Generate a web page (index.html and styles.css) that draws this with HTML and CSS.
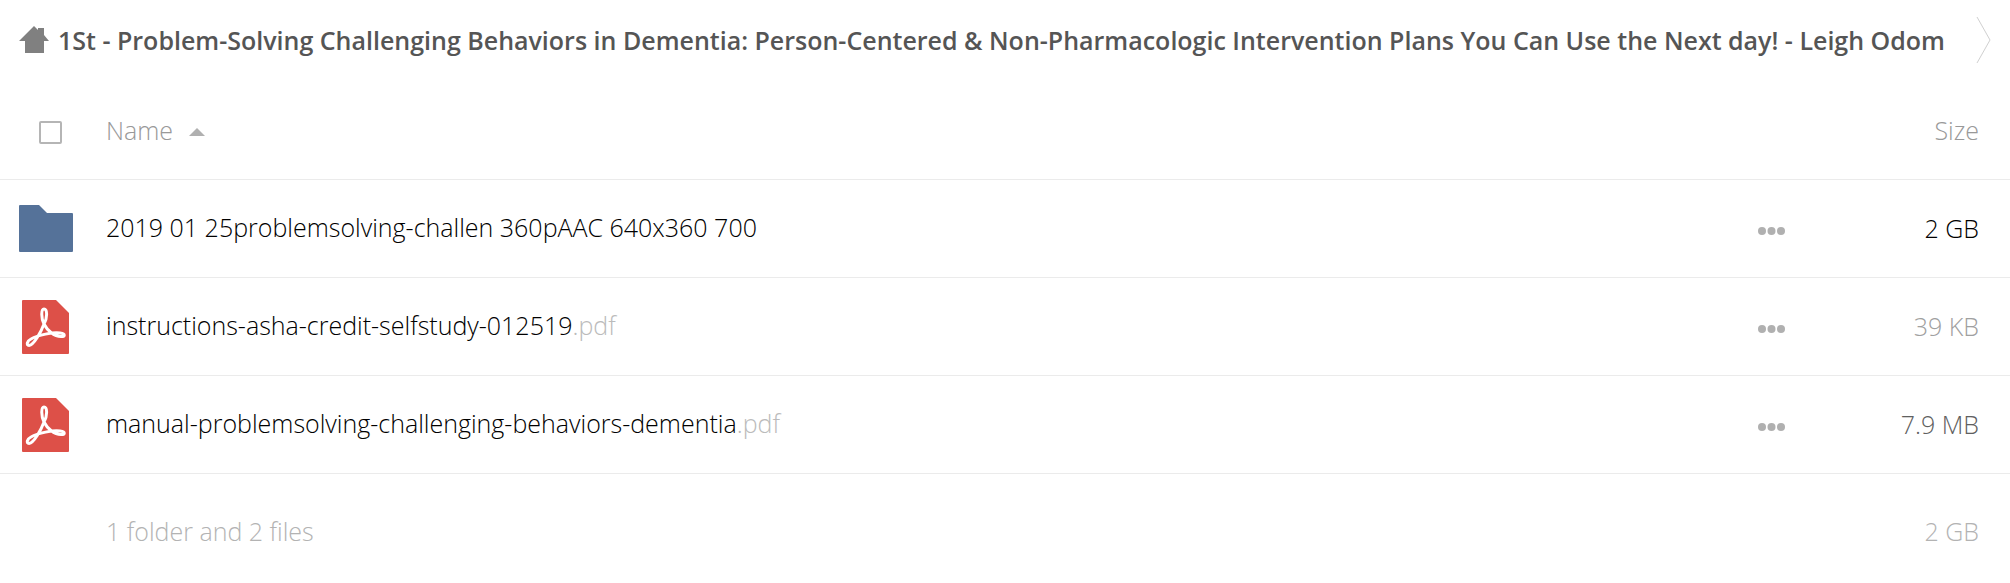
FILE: index.html
```
<!DOCTYPE html>
<html lang="en">
<head>
    <meta charset="UTF-8">
    <meta name="viewport" content="width=device-width, initial-scale=1.0">
    <title>Files</title>
    <link rel="stylesheet" href="styles.css">
</head>
<body>
    <!-- icons used more than once -->
    <svg class="sprite" aria-hidden="true">
        <symbol id="icon-pdf" viewBox="0 0 47 54">
            <path fill="#dd5048" d="M1 0H34L47 13V53a1 1 0 0 1-1 1H1a1 1 0 0 1-1-1V1a1 1 0 0 1 1-1z"/>
            <path fill="none" stroke="#fff" stroke-width="3" stroke-linejoin="round" d="M22 24C19 18 19 9 22 9C25.500 9 25.500 18 22 24C19 32 12 45 7 45.500C4 45.500 5 41 9 39C16 35 31 32 38 33C44 34 43 36.500 39 36.500C32 36.500 25 30 22 24z"/>
        </symbol>
        <symbol id="icon-more" viewBox="0 0 28 8">
            <circle cx="4" cy="4" r="4"/>
            <circle cx="13.500" cy="4" r="4"/>
            <circle cx="23" cy="4" r="4"/>
        </symbol>
    </svg>

    <nav class="breadcrumb">
        <a href="#" class="home" aria-label="Home">
            <svg width="30" height="28" viewBox="0 0 30 28"><path fill="#808080" d="M15 0L19 4V2H25V9L30 15H25V27H6V15H0z"/></svg>
        </a>
        <a href="#" class="crumb">1St - Problem-Solving Challenging Behaviors in Dementia: Person-Centered &amp; Non-Pharmacologic Intervention Plans You Can Use the Next day! - Leigh Odom</a>
        <svg class="separator" width="16" height="48" viewBox="0 0 16 48"><path fill="none" stroke="#d0d0d0" d="M1 1L14 24L1 47"/></svg>
    </nav>

    <table class="files">
        <thead>
            <tr>
                <th class="select"><input type="checkbox" aria-label="Select all"></th>
                <th class="name"><a href="#">Name <svg width="16" height="8" viewBox="0 0 16 8"><path fill="#b0b0b0" d="M0 8L8 0L16 8z"/></svg></a></th>
                <th class="actions"></th>
                <th class="size"><a href="#">Size</a></th>
            </tr>
        </thead>
        <tbody>
            <tr>
                <td class="icon"><svg class="folder" width="54" height="47" viewBox="0 0 54 47"><path fill="#557299" d="M1 0H20L28 8H53a1 1 0 0 1 1 1V46a1 1 0 0 1-1 1H1a1 1 0 0 1-1-1V1a1 1 0 0 1 1-1z"/></svg></td>
                <td class="name"><a href="#">2019 01 25problemsolving-challen 360pAAC 640x360 700</a></td>
                <td class="actions"><button type="button" aria-label="Actions"><svg width="28" height="8"><use href="#icon-more"/></svg></button></td>
                <td class="size">2 GB</td>
            </tr>
            <tr>
                <td class="icon"><svg class="pdf" width="47" height="54"><use href="#icon-pdf"/></svg></td>
                <td class="name"><a href="#">instructions-asha-credit-selfstudy-012519<span class="extension">.pdf</span></a></td>
                <td class="actions"><button type="button" aria-label="Actions"><svg width="28" height="8"><use href="#icon-more"/></svg></button></td>
                <td class="size small">39 KB</td>
            </tr>
            <tr>
                <td class="icon"><svg class="pdf" width="47" height="54"><use href="#icon-pdf"/></svg></td>
                <td class="name"><a href="#">manual-problemsolving-challenging-behaviors-dementia<span class="extension">.pdf</span></a></td>
                <td class="actions"><button type="button" aria-label="Actions"><svg width="28" height="8"><use href="#icon-more"/></svg></button></td>
                <td class="size medium">7.9 MB</td>
            </tr>
        </tbody>
        <tfoot>
            <tr>
                <td></td>
                <td class="name">1 folder and 2 files</td>
                <td></td>
                <td class="size">2 GB</td>
            </tr>
        </tfoot>
    </table>
</body>
</html>
```

FILE: styles.css
```
body {
    margin: 0;
    background-color: #fff;
    font-family: "Open Sans", sans-serif;
    font-size: 25px;
    font-weight: 300;
    line-height: 36px;
    color: #000;
}
a {
    color: inherit;
    text-decoration: none;
}
svg {
    display: block;
}
.sprite {
    display: none;
}

/* Breadcrumb */
.breadcrumb {
    display: flex;
    align-items: center;
    height: 80px;
    padding: 0 0 2px 19px;
    white-space: nowrap;
}
.crumb {
    margin: 0 31px 0 9px;
    font-weight: 550;
    color: #555;
}

/* File list */
.files {
    width: 100%;
    border-collapse: collapse;
    table-layout: fixed;
}
.files th,
.files td {
    height: 97px;
    padding: 0;
    border-bottom: 1px solid #ebebeb;
    text-align: left;
    font-weight: 300;
    vertical-align: middle;
}
.files th {
    color: #999;
}
.files .select,
.files .icon {
    width: 106px;
}
.files .actions {
    width: 96px;
}
.files .size {
    width: 125px;
    padding-right: 31px;
    text-align: right;
}
.files .name,
.files .size {
    height: 95px;
    padding-bottom: 2px;
}
.files tbody .name {
    height: 93px;
    padding-bottom: 4px;
}
.select input {
    appearance: none;
    display: block;
    width: 23px;
    height: 23px;
    margin: 4px 0 0 39px;
    border: 2px solid #b5b5b5;
    border-radius: 2px;
    background-color: #fff;
}
th.name svg {
    display: inline-block;
    margin: 0 0 4px 9px;
}
.folder {
    margin-left: 19px;
}
.pdf {
    margin-left: 22px;
}
.extension {
    color: #bbb;
}
.actions button {
    display: block;
    padding: 4px 0 0;
    border: none;
    background: none;
    fill: #b0b0b0;
    cursor: pointer;
}
.files .small {
    color: #a0a0a0;
}
.files .medium {
    color: #606060;
}

/* Summary */
.files tfoot td {
    height: 116px;
    border: none;
    color: #b3b3b3;
}
```
